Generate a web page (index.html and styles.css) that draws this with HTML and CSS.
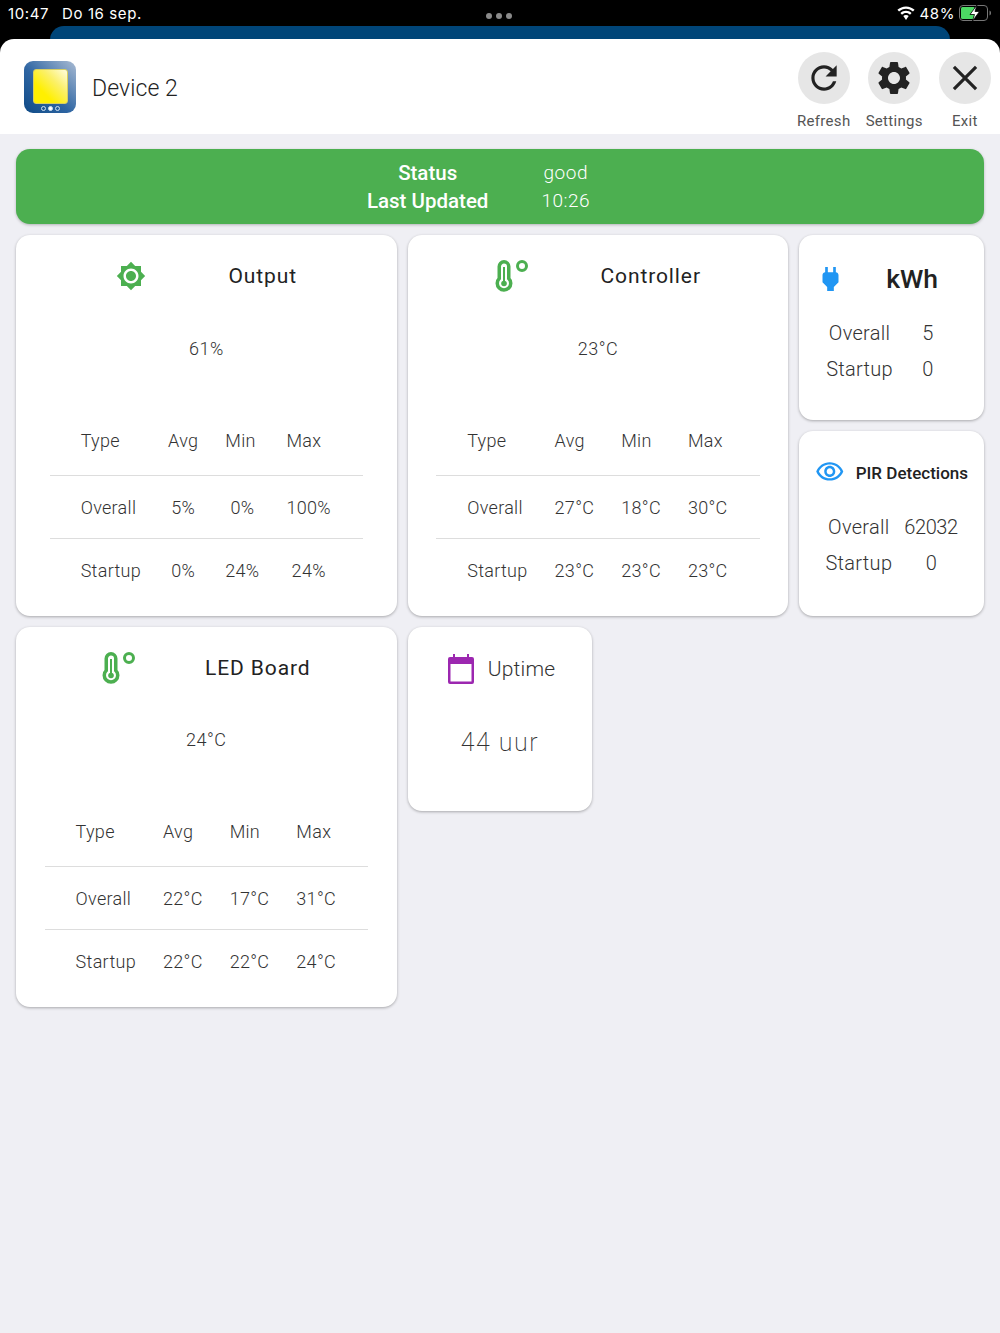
FILE: index.html
```html
<!DOCTYPE html>
<html lang="en">
<head>
    <meta charset="UTF-8">
    <meta name="viewport" content="width=device-width, initial-scale=1.0">
    <title>Device 2</title>
    <link rel="stylesheet" href="styles.css">
</head>
<body>
    <div class="top">
        <div class="statusbar">
            <div class="statusbar-left"><span>10:47</span><span>Do 16 sep.</span></div>
            <div class="dots"><i></i><i></i><i></i></div>
            <div class="statusbar-right">
                <svg class="wifi" viewBox="0 0 18 14" width="20" height="15"><path d="M9 2.600c2.500 0 4.800 1 6.500 2.600L17 3.600C14.900 1.600 12.100.4 9 .4S3.100 1.600 1 3.600l1.500 1.600C4.200 3.600 6.500 2.600 9 2.600z" fill="#fff"/><path d="M9 6.600c1.400 0 2.700.5 3.700 1.500l1.500-1.600C12.800 5.200 11 4.400 9 4.400s-3.800.8-5.200 2.100l1.500 1.600c1-1 2.300-1.500 3.700-1.500z" fill="#fff"/><path d="M9 8.400c-1 0-1.900.4-2.500 1L9 13l2.500-3.600c-.6-.6-1.500-1-2.500-1z" fill="#fff"/></svg>
                <span>48%</span>
                <svg class="battery" viewBox="0 0 33 17" width="33" height="17">
                    <rect x="0.500" y="0.500" width="28" height="15" rx="3.500" fill="none" stroke="#777"/>
                    <path d="M30.500 5.500c1.200.4 1.500 1.500 1.500 2.500s-.3 2.100-1.500 2.500z" fill="#777"/>
                    <rect x="2" y="2" width="14" height="12" rx="1.500" fill="#4cd964"/>
                    <path d="M18 0l-7 9.500h4.500L13.500 16l7-9.500H16z" fill="#fff" stroke="#000" stroke-width=".8"/>
                </svg>
            </div>
        </div>
        <div class="strip"></div>
    </div>

    <header class="header">
        <div class="brand">
            <div class="logo">
                <div class="logo-panel"></div>
                <div class="logo-dots"><i></i><i class="on"></i><i></i></div>
            </div>
            <h1>Device 2</h1>
        </div>
        <nav class="actions">
            <div class="action">
                <div class="action-btn"><svg viewBox="0 0 24 24" width="38" height="38"><path d="M17.650 6.350C16.200 4.900 14.210 4 12 4c-4.420 0-7.990 3.580-7.990 8s3.570 8 7.990 8c3.730 0 6.840-2.550 7.730-6h-2.080c-.82 2.330-3.040 4-5.650 4-3.310 0-6-2.690-6-6s2.690-6 6-6c1.660 0 3.140.69 4.220 1.780L13 11h7V4l-2.350 2.350z"/></svg></div>
                <span>Refresh</span>
            </div>
            <div class="action">
                <div class="action-btn"><svg viewBox="0 0 24 24" width="40" height="40"><path d="M19.140 12.940c.04-.3.06-.61.06-.94 0-.32-.02-.64-.07-.94l2.030-1.580c.18-.14.23-.41.12-.61l-1.920-3.320c-.12-.22-.37-.29-.59-.22l-2.390.96c-.5-.38-1.030-.7-1.620-.94l-.36-2.540c-.04-.24-.24-.41-.48-.41h-3.840c-.24 0-.43.17-.47.41l-.36 2.540c-.59.24-1.130.57-1.620.94l-2.390-.96c-.22-.08-.47 0-.59.22L2.740 8.870c-.12.21-.08.47.12.61l2.030 1.580c-.05.3-.09.63-.09.94s.02.64.07.94l-2.030 1.580c-.18.14-.23.41-.12.61l1.920 3.320c.12.22.37.29.59.22l2.390-.96c.5.38 1.030.7 1.620.94l.36 2.540c.05.24.24.41.48.41h3.840c.24 0 .44-.17.47-.41l.36-2.540c.59-.24 1.130-.56 1.620-.94l2.390.96c.22.08.47 0 .59-.22l1.920-3.320c.12-.22.07-.47-.12-.61l-2.010-1.580zM12 15.600c-1.980 0-3.600-1.620-3.600-3.600s1.620-3.600 3.600-3.600 3.600 1.620 3.600 3.600-1.620 3.600-3.600 3.600z"/></svg></div>
                <span>Settings</span>
            </div>
            <div class="action">
                <div class="action-btn"><svg viewBox="0 0 24 24" width="38" height="38"><path d="M5 5l14 14M19 5L5 19" fill="none" stroke="#222" stroke-width="2"/></svg></div>
                <span>Exit</span>
            </div>
        </nav>
    </header>

    <main class="content">
        <section class="status">
            <table>
                <tr><th>Status</th><td>good</td></tr>
                <tr><th>Last Updated</th><td>10:26</td></tr>
            </table>
        </section>

        <div class="grid">
            <article class="card card-big">
                <div class="card-title card-title-output">
                    <svg class="green" viewBox="0 0 24 24" width="30" height="30"><path d="M20 8.690V4h-4.690L12 .69 8.690 4H4v4.690L.69 12 4 15.310V20h4.690L12 23.310 15.310 20H20v-4.690L23.310 12 20 8.690zM12 18c-3.310 0-6-2.690-6-6s2.690-6 6-6 6 2.690 6 6-2.690 6-6 6zm0-10c-2.210 0-4 1.790-4 4s1.790 4 4 4 4-1.790 4-4-1.790-4-4-4z"/></svg>
                    <h2>Output</h2>
                </div>
                <div class="card-value">61%</div>
                <table class="stats">
                    <tr><th>Type</th><th>Avg</th><th>Min</th><th>Max</th></tr>
                    <tr><td>Overall</td><td>5%</td><td>0%</td><td>100%</td></tr>
                    <tr><td>Startup</td><td>0%</td><td>24%</td><td>24%</td></tr>
                </table>
            </article>

            <article class="card card-big">
                <div class="card-title">
                    <svg class="thermo" viewBox="0 0 33 32" width="33" height="32"><path d="M4.250 18.500V6.500a4.750 4.750 0 0 1 9.500 0v12a6.750 6.750 0 1 1-9.500 0z" fill="none" stroke="#4caf50" stroke-width="3.500"/><path d="M9 7v14" stroke="#4caf50" stroke-width="2"/><circle cx="9" cy="23.500" r="2.800" fill="#4caf50"/><circle cx="27" cy="6" r="4.500" fill="none" stroke="#4caf50" stroke-width="3"/></svg>
                    <h2>Controller</h2>
                </div>
                <div class="card-value">23°C</div>
                <table class="stats">
                    <tr><th>Type</th><th>Avg</th><th>Min</th><th>Max</th></tr>
                    <tr><td>Overall</td><td>27°C</td><td>18°C</td><td>30°C</td></tr>
                    <tr><td>Startup</td><td>23°C</td><td>23°C</td><td>23°C</td></tr>
                </table>
            </article>

            <article class="card card-small">
                <div class="small-title">
                    <svg class="blue plug" viewBox="6 3 12 18" width="17" height="24"><path d="M16 7V3h-2v4h-4V3H8v4C7 7 6 8 6 9v5.500L9.500 18v3h5v-3l3.500-3.500V9c0-1-1-2-2-2z"/></svg>
                    <h2 class="kwh">kWh</h2>
                </div>
                <table class="pairs">
                    <tr><td>Overall</td><td>5</td></tr>
                    <tr><td>Startup</td><td>0</td></tr>
                </table>
            </article>

            <article class="card card-small">
                <div class="small-title pir">
                    <svg class="blue" viewBox="0 0 24 24" width="32" height="32"><path d="M12 6c3.790 0 7.170 2.130 8.820 5.500C19.170 14.870 15.790 17 12 17s-7.170-2.130-8.820-5.500C4.830 8.130 8.210 6 12 6m0-2C7 4 2.730 7.110 1 11.500 2.730 15.890 7 19 12 19s9.270-3.110 11-7.500C21.270 7.110 17 4 12 4zm0 5c1.380 0 2.500 1.120 2.500 2.500S13.380 14 12 14s-2.500-1.120-2.500-2.500S10.620 9 12 9m0-2c-2.480 0-4.500 2.020-4.500 4.500S9.520 16 12 16s4.500-2.020 4.500-4.500S14.480 7 12 7z"/></svg>
                    <h2>PIR Detections</h2>
                </div>
                <table class="pairs pairs-pir">
                    <tr><td>Overall</td><td>62032</td></tr>
                    <tr><td>Startup</td><td>0</td></tr>
                </table>
            </article>

            <article class="card card-big">
                <div class="card-title">
                    <svg class="thermo" viewBox="0 0 33 32" width="33" height="32"><path d="M4.250 18.500V6.500a4.750 4.750 0 0 1 9.500 0v12a6.750 6.750 0 1 1-9.500 0z" fill="none" stroke="#4caf50" stroke-width="3.500"/><path d="M9 7v14" stroke="#4caf50" stroke-width="2"/><circle cx="9" cy="23.500" r="2.800" fill="#4caf50"/><circle cx="27" cy="6" r="4.500" fill="none" stroke="#4caf50" stroke-width="3"/></svg>
                    <h2>LED Board</h2>
                </div>
                <div class="card-value">24°C</div>
                <table class="stats">
                    <tr><th>Type</th><th>Avg</th><th>Min</th><th>Max</th></tr>
                    <tr><td>Overall</td><td>22°C</td><td>17°C</td><td>31°C</td></tr>
                    <tr><td>Startup</td><td>22°C</td><td>22°C</td><td>24°C</td></tr>
                </table>
            </article>

            <article class="card card-small uptime">
                <div class="uptime-title">
                    <svg class="purple" viewBox="0 0 26 30" width="26" height="30"><path d="M5 0h2v3h12V0h2v3h3a2 2 0 0 1 2 2v23a2 2 0 0 1-2 2H2a2 2 0 0 1-2-2V5a2 2 0 0 1 2-2h3zM2.500 10v17.500h21V10z"/></svg>
                    <h2>Uptime</h2>
                </div>
                <div class="uptime-value">44 uur</div>
            </article>
        </div>
    </main>
</body>
</html>
```

FILE: styles.css
```css
* {
    margin: 0;
    padding: 0;
    box-sizing: border-box;
}
body {
    min-height: 1333px;
    background: #efeff4;
    font-family: Roboto, sans-serif;
    color: #333;
}
h1, h2 {
    font-weight: 400;
}
table {
    border-collapse: collapse;
}

/* ios bar */
.top {
    background: #000;
    height: 53px;
    margin-bottom: -14px;
}
.statusbar {
    position: relative;
    height: 26px;
    display: flex;
    justify-content: space-between;
    align-items: center;
    padding: 0 8px;
    color: #fff;
    font-family: Inter, sans-serif;
    font-size: 15px;
    letter-spacing: .6px;
}
.statusbar-left {
    display: flex;
    gap: 13px;
}
.statusbar-right {
    display: flex;
    align-items: center;
    gap: 4px;
}
.dots {
    position: absolute;
    left: 486px;
    top: 13px;
    display: flex;
    gap: 4px;
}
.dots i {
    width: 6px;
    height: 6px;
    border-radius: 50%;
    background: #8a8a8a;
}
.strip {
    height: 27px;
    margin: 0 50px;
    background: #004578;
    border-radius: 14px 14px 0 0;
}

/* header */
.header {
    position: relative;
    height: 95px;
    background: #fff;
    border-radius: 14px 14px 0 0;
    display: flex;
    justify-content: space-between;
}
.brand {
    display: flex;
    align-items: center;
    gap: 16px;
    padding: 1px 0 0 24px;
}
.brand h1 {
    font-size: 23px;
    font-weight: 300;
    letter-spacing: .1px;
    color: #222;
    padding-top: 3px;
}
.logo {
    width: 52px;
    height: 52px;
    border-radius: 9px;
    background: linear-gradient(to top right, #0f4a86 0%, #2f66a3 45%, #a9bbd3 100%);
    display: flex;
    flex-direction: column;
    align-items: center;
    padding-top: 8px;
}
.logo-panel {
    width: 35px;
    height: 35px;
    border-radius: 3px;
    border: 1px solid #d8cf60;
    background: linear-gradient(to top right, #fff000 30%, #fbf06a 65%, #fffde0 100%);
}
.logo-dots {
    display: flex;
    gap: 2px;
    margin-top: 2px;
}
.logo-dots i {
    width: 5px;
    height: 5px;
    border-radius: 50%;
    border: 1px solid #cfe0f0;
}
.logo-dots .on {
    background: #fff;
}
.actions {
    display: flex;
}
.action {
    width: 70.500px;
    display: flex;
    flex-direction: column;
    align-items: center;
    padding-top: 13px;
    gap: 8px;
    white-space: nowrap;
}
.action-btn {
    width: 52px;
    height: 52px;
    border-radius: 50%;
    background: #e6e6e6;
    display: flex;
    justify-content: center;
    align-items: center;
}
.action-btn svg {
    fill: #222;
}
.action span {
    font-size: 15px;
    line-height: 18px;
    letter-spacing: .3px;
    color: #555;
}

/* page */
.content {
    padding: 15px 16px;
}
.status {
    height: 75px;
    margin-bottom: 11px;
    border-radius: 14px;
    background: #4caf50;
    box-shadow: 0 1px 3px rgba(0, 0, 0, .25);
    color: #fff;
    display: flex;
    justify-content: center;
    align-items: center;
    font-size: 19px;
}
.status table {
    margin-left: -43px;
}
.status th, .status td {
    text-align: center;
    line-height: 28px;
}
.status th {
    font-weight: 500;
    font-size: 20.500px;
    padding-right: 53px;
}
.status td {
    font-weight: 300;
    letter-spacing: .5px;
}
.grid {
    display: grid;
    grid-template-columns: repeat(5, 1fr);
    grid-auto-rows: 184.800px;
    gap: 11px;
}
.card {
    background: #fff;
    border-radius: 14px;
    box-shadow: 0 1px 3px rgba(0, 0, 0, .3);
    overflow: hidden;
}
.card-big {
    grid-column: span 2;
    grid-row: span 2;
}
.card-small {
    grid-column: span 1;
}
.uptime {
    grid-column: 3;
}
.card-title {
    height: 82px;
    padding: 0 51px;
    display: flex;
    justify-content: space-around;
    align-items: center;
}
.card-title-output {
    padding: 0 58px;
}
.card-title h2 {
    font-size: 21px;
    letter-spacing: .9px;
    color: #222;
}
.green {
    fill: #4caf50;
}
.blue {
    fill: #2196f3;
}
.purple {
    fill: #9c27b0;
}
.card-value {
    height: 62px;
    margin-bottom: 26px;
    display: flex;
    justify-content: center;
    align-items: center;
    font-size: 18px;
    font-weight: 300;
    letter-spacing: .5px;
}
.stats {
    margin: 0 auto;
    font-size: 18px;
    font-weight: 300;
    letter-spacing: .3px;
}
.stats th, .stats td {
    height: 63px;
    padding: 1px 13.500px 0;
    text-align: center;
    font-weight: 300;
    white-space: nowrap;
}
.stats th {
    height: 70px;
    text-align: left;
}
.stats tr + tr td {
    border-top: 1px solid #ddd;
}
.stats tr > :first-child {
    padding-left: 31px;
    text-align: left;
}
.stats tr > :last-child {
    padding-right: 32px;
}

/* small cards */
.small-title {
    height: 88px;
    padding: 0 46px 0 23px;
    display: flex;
    justify-content: space-between;
    align-items: center;
}
.kwh {
    font-size: 26.500px;
    font-weight: 500;
    color: #222;
    margin-top: -2px;
}
.pir {
    height: 82px;
    padding: 0 16px;
    gap: 11px;
    justify-content: flex-start;
}
.pir h2 {
    font-size: 17px;
    font-weight: 500;
    color: #222;
    white-space: nowrap;
    padding-top: 2px;
}
.pairs {
    margin: -8px auto 0;
    font-size: 20px;
    font-weight: 300;
    letter-spacing: .3px;
}
.pairs-pir {
    margin-top: -4px;
}
.pairs td {
    height: 36px;
    text-align: center;
    white-space: nowrap;
    min-width: 66px;
    padding-left: 12px;
}
.pairs td:first-child {
    padding: 0;
}
.pairs td:last-child {
    min-width: 64px;
    padding-right: 6px;
}
.pairs-pir td:last-child {
    padding-right: 0;
    letter-spacing: -.4px;
}
.uptime-title {
    height: 84px;
    padding-left: 3px;
    display: flex;
    justify-content: center;
    align-items: center;
    gap: 14px;
}
.uptime-title h2 {
    font-size: 21px;
    font-weight: 300;
    letter-spacing: .2px;
}
.uptime-value {
    margin-top: 17px;
    text-align: center;
    font-size: 25px;
    font-weight: 200;
    letter-spacing: 1.500px;
}
```
